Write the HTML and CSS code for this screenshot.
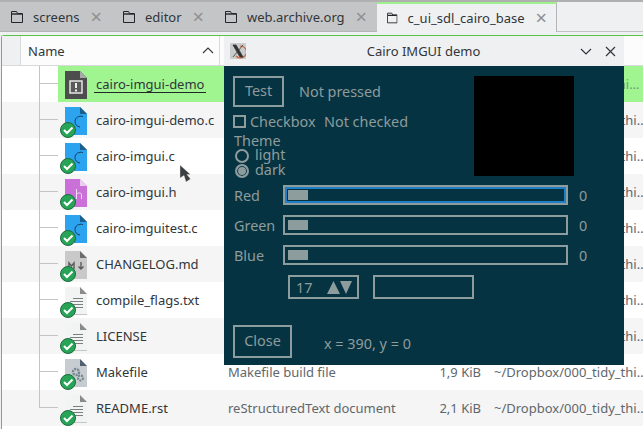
FILE: index.html
```html
<!DOCTYPE html>
<html lang="en">
<head>
  <meta charset="UTF-8">
  <title>c_ui_sdl_cairo_base</title>
  <link rel="stylesheet" href="styles.css">
</head>
<body>
  <svg class="defs" width="0" height="0">
    <defs>
      <symbol id="folder" viewBox="0 0 12 12">
        <path d="M.5 11.5V.5h5l1 2h5v9z" fill="none" stroke="#232629"/>
        <path d="M1 3h10" stroke="#232629" stroke-width="1.4"/>
      </symbol>
      <symbol id="badge" viewBox="0 0 18 18">
        <circle cx="9" cy="9" r="7.5" fill="#27a455" stroke="#1d6b40" stroke-width="1"/>
        <path d="M5 9l3 3 5.500-5.500" fill="none" stroke="#fff" stroke-width="2"/>
      </symbol>
      <symbol id="page-c" viewBox="0 0 22 28">
        <path d="M0 0h15l7 7v21H0z" fill="#2ba3ee"/>
        <path d="M15 0l7 7h-7z" fill="#1b5f8e"/>
        <path d="M18 9.500c-4-1-8 1-8 5 0 3 2 5 5 5.500" fill="none" stroke="#123f5c" stroke-width="1"/>
      </symbol>
      <symbol id="page-h" viewBox="0 0 22 28">
        <path d="M0 0h15l7 7v21H0z" fill="#cb6fd9"/>
        <path d="M15 0l7 7h-7z" fill="#eccdf1"/>
        <path d="M11.500 10v10M11.500 15c3-2 5-1 5 1v4" fill="none" stroke="#f3dff6" stroke-width="1"/>
      </symbol>
      <symbol id="page-md" viewBox="0 0 22 28">
        <path d="M0 0h15l7 7v21H0z" fill="#c9c9c9"/>
        <path d="M15 0l7 7h-7z" fill="#6d6d6d"/>
        <path d="M4 18v-6l2.500 3 2.500-3v6M16 11v7M13.500 15.500l2.500 2.500 2.500-2.500" fill="none" stroke="#5a5a5a" stroke-width="1.400"/>
      </symbol>
      <symbol id="page-txt" viewBox="0 0 22 28">
        <path d="M0 0h15l7 7v21H0z" fill="#f2f3f3"/>
        <path d="M15 0l7 7h-7z" fill="#8b8b8b"/>
        <path d="M0 27.500h22" stroke="#c4c6c7"/>
        <path d="M8 11.500h10M5 14.500h13M8 17.500h10M5 20.500h13" stroke="#7b7f82"/>
      </symbol>
      <symbol id="page-make" viewBox="0 0 22 28">
        <path d="M0 0h15l7 7v21H0z" fill="#c6ccd0"/>
        <path d="M15 0l7 7h-7z" fill="#50606e"/>
        <circle cx="11" cy="13" r="3" fill="none" stroke="#75838d" stroke-width="2.400" stroke-dasharray="2 1"/>
        <circle cx="15.500" cy="19" r="2.500" fill="none" stroke="#75838d" stroke-width="2" stroke-dasharray="2 1"/>
      </symbol>
    </defs>
  </svg>

  <div class="tabs">
    <div class="tab"><svg class="tab-icon"><use href="#folder"/></svg><span>screens</span><span class="tab-close">×</span></div>
    <div class="tab"><svg class="tab-icon"><use href="#folder"/></svg><span>editor</span><span class="tab-close">×</span></div>
    <div class="tab"><svg class="tab-icon"><use href="#folder"/></svg><span>web.archive.org</span><span class="tab-close">×</span></div>
    <div class="tab active"><svg class="tab-icon"><use href="#folder"/></svg><span>c_ui_sdl_cairo_base</span><span class="tab-close">×</span></div>
    <div class="tabs-rest"></div>
  </div>

  <div class="panel">
    <div class="head">
      <div class="head-gutter"></div>
      <div class="head-name">
        <span>Name</span>
        <svg width="12" height="7" viewBox="0 0 12 7"><path d="M1 6l5-5 5 5" fill="none" stroke="#31363b" stroke-width="1.100"/></svg>
      </div>
    </div>

    <div class="row sel">
      <div class="tree"></div>
      <div class="main">
        <svg class="file-icon" viewBox="0 0 32 36">
          <path d="M7 5h15l7 7v21H7z" fill="#4d4d4d"/>
          <path d="M22 5l7 7h-7z" fill="#a9a9a9"/>
          <rect x="12" y="15" width="12" height="12" fill="#5a5a5a" stroke="#e6e6e6" stroke-width="1.500"/>
          <path d="M18 17v5M18 23.500v2" stroke="#eee" stroke-width="2"/>
        </svg>
        <span class="name">cairo-imgui-demo</span>
        <span class="desc">ELF executable</span>
        <span class="size">67,4 KiB</span>
        <span class="path">~/Dropbox/000_tidy_thi…</span>
      </div>
    </div>
    <div class="row alt">
      <div class="tree"></div>
      <div class="main">
        <svg class="file-icon" viewBox="0 0 32 36"><use href="#page-c" x="7" y="5" width="22" height="28"/><use href="#badge" x="1" y="19" width="18" height="18"/></svg>
        <span class="name">cairo-imgui-demo.c</span>
        <span class="desc">C source code</span>
        <span class="size">4,2 KiB</span>
        <span class="path">~/Dropbox/000_tidy_thi…</span>
      </div>
    </div>
    <div class="row">
      <div class="tree"></div>
      <div class="main">
        <svg class="file-icon" viewBox="0 0 32 36"><use href="#page-c" x="7" y="5" width="22" height="28"/><use href="#badge" x="1" y="19" width="18" height="18"/></svg>
        <span class="name">cairo-imgui.c</span>
        <span class="desc">C source code</span>
        <span class="size">21,8 KiB</span>
        <span class="path">~/Dropbox/000_tidy_thi…</span>
      </div>
    </div>
    <div class="row alt">
      <div class="tree"></div>
      <div class="main">
        <svg class="file-icon" viewBox="0 0 32 36"><use href="#page-h" x="7" y="5" width="22" height="28"/><use href="#badge" x="1" y="19" width="18" height="18"/></svg>
        <span class="name">cairo-imgui.h</span>
        <span class="desc">C header</span>
        <span class="size">3,1 KiB</span>
        <span class="path">~/Dropbox/000_tidy_thi…</span>
      </div>
    </div>
    <div class="row">
      <div class="tree"></div>
      <div class="main">
        <svg class="file-icon" viewBox="0 0 32 36"><use href="#page-c" x="7" y="5" width="22" height="28"/><use href="#badge" x="1" y="19" width="18" height="18"/></svg>
        <span class="name">cairo-imguitest.c</span>
        <span class="desc">C source code</span>
        <span class="size">5,6 KiB</span>
        <span class="path">~/Dropbox/000_tidy_thi…</span>
      </div>
    </div>
    <div class="row alt">
      <div class="tree"></div>
      <div class="main">
        <svg class="file-icon" viewBox="0 0 32 36"><use href="#page-md" x="7" y="5" width="22" height="28"/><use href="#badge" x="1" y="19" width="18" height="18"/></svg>
        <span class="name">CHANGELOG.md</span>
        <span class="desc">Markdown document</span>
        <span class="size">1,2 KiB</span>
        <span class="path">~/Dropbox/000_tidy_thi…</span>
      </div>
    </div>
    <div class="row">
      <div class="tree"></div>
      <div class="main">
        <svg class="file-icon" viewBox="0 0 32 36"><use href="#page-txt" x="7" y="5" width="22" height="28"/><use href="#badge" x="1" y="19" width="18" height="18"/></svg>
        <span class="name">compile_flags.txt</span>
        <span class="desc">Plain text document</span>
        <span class="size">64 B</span>
        <span class="path">~/Dropbox/000_tidy_thi…</span>
      </div>
    </div>
    <div class="row alt">
      <div class="tree"></div>
      <div class="main">
        <svg class="file-icon" viewBox="0 0 32 36"><use href="#page-txt" x="7" y="5" width="22" height="28"/><use href="#badge" x="1" y="19" width="18" height="18"/></svg>
        <span class="name">LICENSE</span>
        <span class="desc">Plain text document</span>
        <span class="size">1,1 KiB</span>
        <span class="path">~/Dropbox/000_tidy_thi…</span>
      </div>
    </div>
    <div class="row">
      <div class="tree"></div>
      <div class="main">
        <svg class="file-icon" viewBox="0 0 32 36"><use href="#page-make" x="7" y="5" width="22" height="28"/><use href="#badge" x="1" y="19" width="18" height="18"/></svg>
        <span class="name">Makefile</span>
        <span class="desc">Makefile build file</span>
        <span class="size">1,9 KiB</span>
        <span class="path">~/Dropbox/000_tidy_thi…</span>
      </div>
    </div>
    <div class="row alt last">
      <div class="tree"></div>
      <div class="main">
        <svg class="file-icon" viewBox="0 0 32 36"><use href="#page-txt" x="7" y="5" width="22" height="28"/><use href="#badge" x="1" y="19" width="18" height="18"/></svg>
        <span class="name">README.rst</span>
        <span class="desc">reStructuredText document</span>
        <span class="size">2,1 KiB</span>
        <span class="path">~/Dropbox/000_tidy_thi…</span>
      </div>
    </div>
  </div>

  <!-- mouse pointer -->
  <svg class="pointer" width="14" height="20" viewBox="0 0 14 20">
    <path d="M1 1v13l4-2.500 2 6.500 4.500-3-3.500-4.500h3.500z" fill="#3c3f41" stroke="#e8e8e8" stroke-opacity=".5" stroke-width=".8"/>
  </svg>

  <!-- floating demo window -->
  <div class="win">
    <div class="win-title">
      <svg class="win-logo" width="16" height="16" viewBox="0 0 16 16">
        <rect width="16" height="16" rx="1" fill="#c8cccd"/>
        <path d="M10 3a6 6 0 1 1-4 10" fill="none" stroke="#d9603a" stroke-width="1.200"/>
        <path d="M3 2h3l7 12h-3zM13 2L3 14" fill="#333" stroke="#333" stroke-width=".8"/>
      </svg>
      <span class="win-name">Cairo IMGUI demo</span>
      <svg class="win-btn" width="12" height="7" viewBox="0 0 12 7"><path d="M1 1l5 5 5-5" fill="none" stroke="#31363b" stroke-width="1.200"/></svg>
      <svg class="win-btn" width="11" height="11" viewBox="0 0 11 11"><path d="M1 1l9 9M10 1l-9 9" fill="none" stroke="#31363b" stroke-width="1.200"/></svg>
    </div>
    <div class="win-body">
      <div class="top">
        <div class="controls">
          <div class="test-row">
            <div class="btn test-btn">Test</div>
            <span>Not pressed</span>
          </div>
          <div class="check-row">
            <span class="check"></span>
            <span class="check-label">Checkbox</span>
            <span>Not checked</span>
          </div>
          <div class="theme-label">Theme</div>
          <div class="radio-row"><span class="radio"></span><span class="radio-text">light</span></div>
          <div class="radio-row"><span class="radio on"></span><span class="radio-text">dark</span></div>
        </div>
        <div class="canvas"></div>
      </div>
      <div class="sliders">
        <span>Red</span><div class="slider focus"><div class="handle"></div></div><span>0</span>
        <span>Green</span><div class="slider"><div class="handle"></div></div><span>0</span>
        <span>Blue</span><div class="slider"><div class="handle"></div></div><span>0</span>
      </div>
      <div class="input-row">
        <div class="spin">
          <span>17</span>
          <svg width="25" height="13" viewBox="0 0 25 13"><path d="M0 13L6.500 0 13 13zM13 0h12L19 13z" fill="#8d9c9d"/></svg>
        </div>
        <div class="text-box"></div>
      </div>
      <div class="bottom-row">
        <div class="btn close-btn">Close</div>
        <span class="coords">x = 390, y = 0</span>
      </div>
    </div>
  </div>
</body>
</html>
```

FILE: styles.css
```css
* {
  box-sizing: border-box;
}
html, body {
  height: 100%;
}
body {
  margin: 0;
  overflow: hidden;
  background: #eff0f1;
  color: #31363b;
  font-family: "Noto Sans", sans-serif;
  font-size: 13px;
}
.defs {
  display: block;
}

/* tab strip */
.tabs {
  display: flex;
  height: 35px;
  border-top: 2px solid #b0b0b0;
}
.tab {
  display: flex;
  align-items: center;
  height: 30px;
  padding: 0 10px 0 11px;
  background: #c4c5c6;
  border-bottom: 1px solid #b4b5b6;
}
.tab-icon {
  width: 12px;
  height: 12px;
  margin-right: 10px;
}
.tab-close {
  margin-left: 11px;
  color: #8e9192;
  font-size: 20px;
  line-height: 20px;
}
.tab.active {
  height: 30px;
  padding: 0 9px 0 10px;
  width: 180px;
  background: #eff0f1;
  border-top: 2px solid #9ff08f;
  border-right: 1px solid #b4b5b6;
  border-bottom: none;
}
.tabs-rest {
  flex: 1;
  height: 30px;
  border-bottom: 1px solid #c0c1c2;
}

/* file list */
.panel {
  height: 394px;
  margin-left: 1px;
  background: #fff;
  border-top: 1px solid #57c548;
  border-left: 1px solid #57c548;
  border-top-left-radius: 3px;
}
.head {
  display: flex;
  height: 30px;
  background: #fcfcfc;
  border-bottom: 1px solid #d8d9da;
}
.head-gutter {
  width: 19px;
  background: #eff0f1;
  border-right: 1px solid #d8d9da;
}
.head-name {
  display: flex;
  align-items: center;
  justify-content: space-between;
  width: 199px;
  padding: 0 5px 0 7px;
  border-right: 1px solid #d8d9da;
}
.row {
  display: flex;
  height: 36px;
}
.row.alt {
  background: #f5f5f5;
}
.tree {
  flex: none;
  width: 56px;
  background:
    linear-gradient(#c4c4c4, #c4c4c4) 37px 0 / 1px 100% no-repeat,
    linear-gradient(#c4c4c4, #c4c4c4) 37px 17px / 19px 1px no-repeat;
}
.row.last .tree {
  background:
    linear-gradient(#c4c4c4, #c4c4c4) 37px 0 / 1px 18px no-repeat,
    linear-gradient(#c4c4c4, #c4c4c4) 37px 17px / 19px 1px no-repeat;
}
.main {
  display: flex;
  flex: 1;
  align-items: center;
  min-width: 0;
  overflow: hidden;
}
.row.sel .main {
  background: #a0f590;
  height: 36px;
}
.file-icon {
  flex: none;
  width: 32px;
  height: 36px;
}
.name {
  flex: none;
  width: 132px;
  margin-left: 6px;
}
.row.sel .name {
  flex: none;
  width: auto;
  margin: 0 20px 0 4px;
  padding: 2px 2px 0;
  line-height: 15px;
  border-bottom: 1px solid #232629;
}
.desc {
  flex: none;
  width: 170px;
  color: #5f676c;
}
.row.sel .desc {
  width: 164px;
}
.size {
  flex: none;
  width: 83px;
  color: #5f676c;
  text-align: right;
}
.path {
  flex: none;
  margin-left: 13px;
  color: #5f676c;
  white-space: nowrap;
}
.row.sel .path {
  color: #6f9a70;
}

/* mouse pointer and window float above the list */
.pointer {
  position: absolute;
  left: 179px;
  top: 164px;
}
.win {
  position: absolute;
  left: 224px;
  top: 36px;
  width: 400px;
  height: 329px;
}
.win-title {
  display: flex;
  align-items: center;
  height: 30px;
  padding: 0 8px 0 6px;
  background: #eff0f1;
}
.win-name {
  flex: 1;
  padding-left: 34px;
  text-align: center;
}
.win-btn {
  margin-left: 13px;
}
.win-body {
  height: 299px;
  padding: 10px 0 0 9px;
  background: #063341;
  color: #8d9c9d;
  font-size: 14.4px;
}

.top {
  display: flex;
  height: 109px;
}
.controls {
  width: 241px;
}
.canvas {
  width: 100px;
  height: 100px;
  background: #000;
}
.btn {
  display: flex;
  align-items: center;
  justify-content: center;
  padding-bottom: 2px;
  border: 2px solid #8d9c9d;
}
.test-row {
  display: flex;
  align-items: center;
  gap: 15px;
  height: 31px;
}
.test-btn {
  width: 51px;
  height: 31px;
}
.check-row {
  display: flex;
  align-items: center;
  height: 13px;
  margin-top: 8px;
}
.check {
  width: 13px;
  height: 13px;
  border: 2px solid #8d9c9d;
}
.check-label {
  width: 74px;
  margin-left: 4px;
}
.theme-label {
  height: 14px;
  margin-top: 6px;
  padding-left: 1px;
  line-height: 14px;
}
.radio-row {
  display: flex;
  align-items: center;
  gap: 6px;
  height: 15px;
  padding-left: 2px;
}
.radio-text {
  margin-bottom: 2px;
  line-height: 15px;
}
.radio {
  width: 14px;
  height: 14px;
  border: 2px solid #8d9c9d;
  border-radius: 50%;
}
.radio.on {
  background: #8d9c9d;
  box-shadow: inset 0 0 0 1px #063341;
}

.sliders {
  display: grid;
  grid-template-columns: 50px 285px auto;
  grid-auto-rows: 20px;
  row-gap: 10px;
  align-items: center;
}
.sliders span:nth-child(3n+1) {
  padding-left: 1px;
}
.sliders span:nth-child(3n) {
  padding-left: 11px;
}
.slider {
  height: 20px;
  padding: 3px;
  border: 2px solid #8d9c9d;
}
.slider.focus {
  box-shadow: inset 0 0 0 2px #1f7ec4;
}
.handle {
  width: 20px;
  height: 10px;
  background: #8d9c9d;
}
.input-row {
  display: flex;
  gap: 14px;
  margin: 10px 0 0 55px;
}
.spin {
  display: flex;
  align-items: center;
  justify-content: space-between;
  width: 71px;
  height: 24px;
  padding: 0 5px 0 6px;
  border: 2px solid #8d9c9d;
}
.text-box {
  width: 101px;
  height: 24px;
  border: 2px solid #8d9c9d;
}
.bottom-row {
  display: flex;
  align-items: center;
  gap: 32px;
  margin-top: 26px;
}
.close-btn {
  width: 59px;
  height: 33px;
}
.coords {
  margin-top: 4px;
}
```
